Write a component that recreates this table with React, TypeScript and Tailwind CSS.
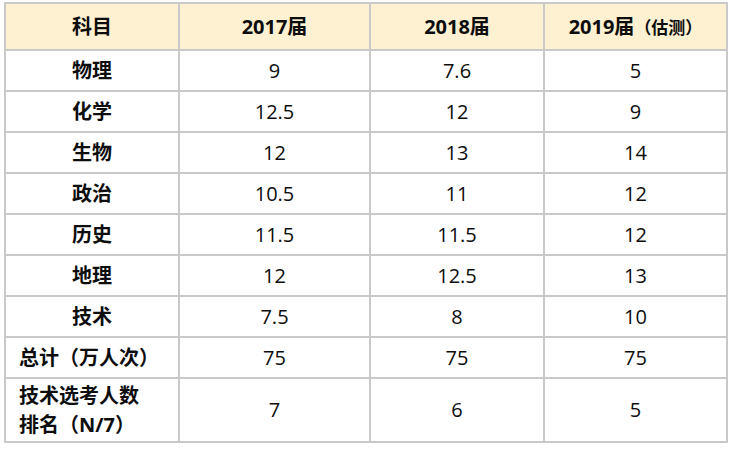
import React from 'react';

const rows: { name: string; left?: boolean; v: string[]; tall?: boolean }[] = [
  { name: '物理', v: ['9', '7.6', '5'] },
  { name: '化学', v: ['12.5', '12', '9'] },
  { name: '生物', v: ['12', '13', '14'] },
  { name: '政治', v: ['10.5', '11', '12'] },
  { name: '历史', v: ['11.5', '11.5', '12'] },
  { name: '地理', v: ['12', '12.5', '13'] },
  { name: '技术', v: ['7.5', '8', '10'] },
  { name: '总计（万人次）', left: true, v: ['75', '75', '75'] },
  { name: '技术选考人数\n排名（N/7）', left: true, tall: true, v: ['7', '6', '5'] },
];

const App: React.FC = () => {
  return (
    <div
      className="h-[449px] w-[730px] bg-white pl-[4px] pt-[2px] text-[#0d0d0d]"
      style={{ fontFamily: '"Open Sans", "Noto Sans CJK SC", sans-serif' }}
    >
      <table className="w-[722px] table-fixed border-collapse border-2 border-[#c9c9c9] text-[20px]">
        <colgroup>
          <col className="w-[174px]" />
          <col className="w-[191px]" />
          <col className="w-[174px]" />
          <col className="w-[183px]" />
        </colgroup>
        <thead>
          <tr className="h-[47px] bg-[#fdf1d2] font-bold">
            <th className="border-2 border-[#c9c9c9]">科目</th>
            <th className="border-2 border-[#c9c9c9]">2017届</th>
            <th className="border-2 border-[#c9c9c9]">2018届</th>
            <th className="border-2 border-[#c9c9c9]">
              2019届<span className="text-[17px]">（估测）</span>
            </th>
          </tr>
        </thead>
        <tbody>
          {rows.map((r) => (
            <tr key={r.name} className={r.tall ? 'h-[64px]' : 'h-[41px]'}>
              <td
                className={`whitespace-pre-line border-2 border-[#c9c9c9] font-bold leading-[29px] ${
                  r.left ? 'pl-[13px] text-left' : 'text-center'
                }`}
              >
                {r.name}
              </td>
              {r.v.map((x, i) => (
                <td key={i} className="border-2 border-[#c9c9c9] text-center">
                  {x}
                </td>
              ))}
            </tr>
          ))}
        </tbody>
      </table>
    </div>
  );
};

export default App;
